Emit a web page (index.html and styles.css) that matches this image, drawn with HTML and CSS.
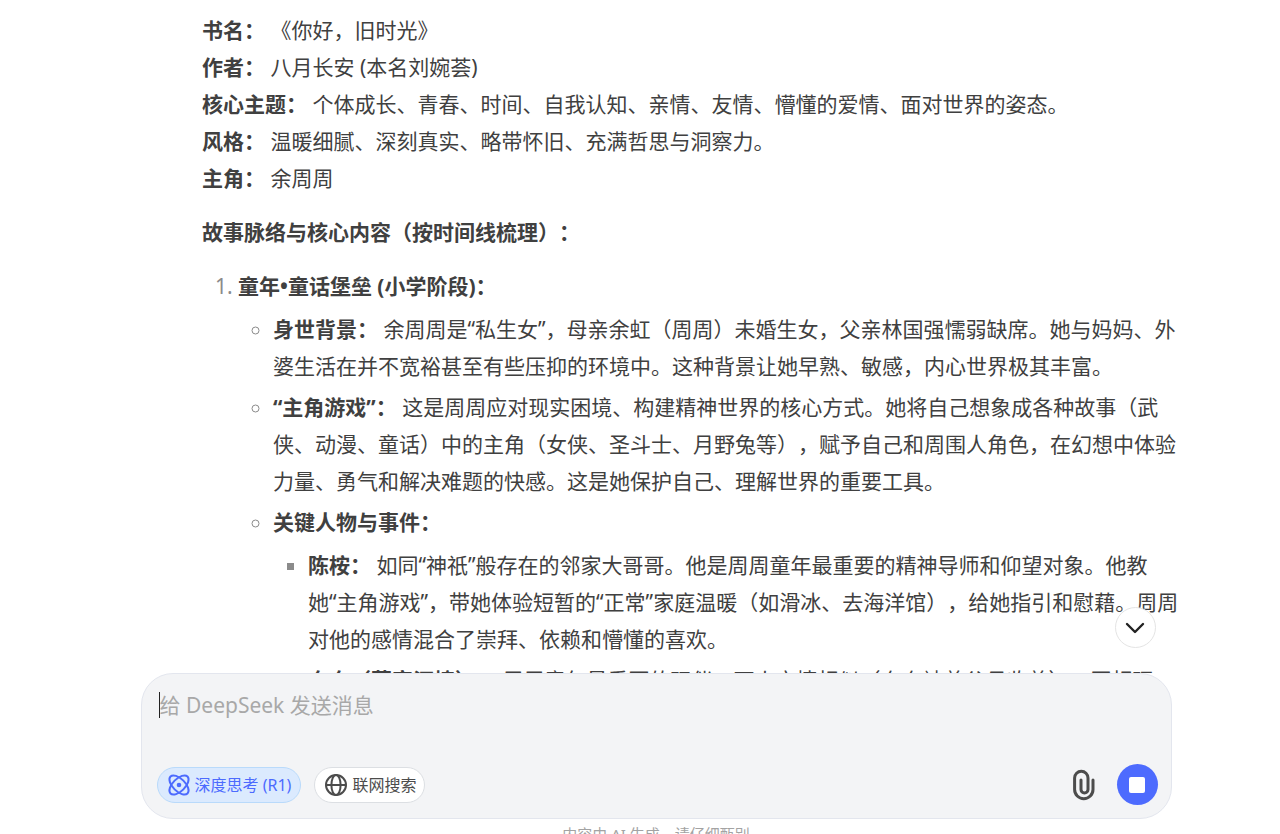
FILE: index.html
```html
<!DOCTYPE html>
<html lang="zh-CN">
<head>
<meta charset="utf-8">
<meta name="viewport" content="width=device-width, initial-scale=1">
<title>DeepSeek</title>
<link rel="stylesheet" href="styles.css">
</head>
<body>
<main class="page">
  <section class="messages">
    <article class="answer">
      <p class="para"><strong>书名：</strong> 《你好，旧时光》<br>
      <strong>作者：</strong> 八月长安 (本名刘婉荟)<br>
      <strong>核心主题：</strong> 个体成长、青春、时间、自我认知、亲情、友情、懵懂的爱情、面对世界的姿态。<br>
      <strong>风格：</strong> 温暖细腻、深刻真实、略带怀旧、充满哲思与洞察力。<br>
      <strong>主角：</strong> 余周周</p>
      <p class="para"><strong>故事脉络与核心内容（按时间线梳理）：</strong></p>
      <ol class="outline">
        <li><strong>童年•童话堡垒 (小学阶段)：</strong>
          <ul class="points">
            <li><strong>身世背景：</strong> 余周周是“私生女”，母亲余虹（周周）未婚生女，父亲林国强懦弱缺席。她与妈妈、外婆生活在并不宽裕甚至有些压抑的环境中。这种背景让她早熟、敏感，内心世界极其丰富。</li>
            <li><strong>“主角游戏”：</strong> 这是周周应对现实困境、构建精神世界的核心方式。她将自己想象成各种故事（武侠、动漫、童话）中的主角（女侠、圣斗士、月野兔等），赋予自己和周围人角色，在幻想中体验力量、勇气和解决难题的快感。这是她保护自己、理解世界的重要工具。</li>
            <li><strong>关键人物与事件：</strong>
              <ul class="details">
                <li><strong>陈桉：</strong> 如同“神祇”般存在的邻家大哥哥。他是周周童年最重要的精神导师和仰望对象。他教<span class="keep">她“主角游戏”，</span>带她体验短暂的“正常”家庭温暖（如滑冰、去海洋馆），给她指引和慰藉。周周对他的感情混合了崇拜、依赖和懵懂的喜欢。</li>
                <li><strong>奔奔（慕容沉樟）：</strong> 周周童年最重要的玩伴，两人亲情相似（奔奔被养父母收养），互相理解、互相依靠。</li>
              </ul>
            </li>
          </ul>
        </li>
      </ol>
    </article>
  </section>

  <form class="composer">
    <button class="jump" type="button" aria-label="回到底部">
      <svg width="20" height="12" viewBox="0 0 20 12" fill="none" stroke="#222" stroke-width="2.4" stroke-linecap="round" stroke-linejoin="round"><path d="M2 2l8 8 8-8"/></svg>
    </button>
    <div class="field">
      <textarea class="input" rows="2" aria-label="消息" placeholder="给 DeepSeek 发送消息"></textarea>
    </div>
    <div class="toolbar">
      <button class="chip chip-on" type="button">
        <svg width="22" height="22" viewBox="0 0 22 22" fill="none" stroke="#4d6bfe" stroke-width="2"><ellipse cx="11" cy="11" rx="12" ry="6.200" transform="rotate(45 11 11)"/><ellipse cx="11" cy="11" rx="12" ry="6.200" transform="rotate(-45 11 11)"/><circle cx="11" cy="11" r="2.300" fill="#4d6bfe" stroke="none"/></svg>
        深度思考 (R1)
      </button>
      <button class="chip" type="button">
        <svg width="22" height="22" viewBox="0 0 22 22" fill="none" stroke="#4c4c4c" stroke-width="2"><circle cx="11" cy="11" r="10"/><ellipse cx="11" cy="11" rx="4.6" ry="10"/><path d="M1 11h20"/></svg>
        联网搜索
      </button>
      <button class="attach" type="button" aria-label="附件">
        <svg width="24" height="32" viewBox="0 0 24 32" fill="none" stroke="#4c4c4c" stroke-width="3" stroke-linecap="round"><path d="M21 11v9.500a9.200 9.200 0 0 1-18.400 0V9a6.700 6.700 0 0 1 13.400 0v11.500a3.500 3.500 0 0 1-7 0V11"/></svg>
      </button>
      <button class="stop" type="button" aria-label="停止"><span class="stop-mark"></span></button>
    </div>
  </form>
  <footer class="note">内容由 AI 生成，请仔细甄别</footer>
</main>
</body>
</html>
```

FILE: styles.css
```css
* {
  box-sizing: border-box;
}

body {
  margin: 0;
  background: #fff;
  color: #404040;
  font-family: "Noto Sans", "Noto Sans CJK SC", sans-serif;
  font-size: 21px;
  line-height: 37px;
  text-spacing-trim: space-all;
}

button,
textarea {
  font-family: inherit;
}

button {
  border: 0;
  padding: 0;
  cursor: pointer;
}

svg {
  display: block;
  flex: none;
  overflow: visible;
}

.page {
  display: flex;
  flex-direction: column;
  align-items: center;
  height: 100vh;
  padding-left: 32px;
  overflow: hidden;
}

.messages {
  flex: 1;
  min-height: 0;
  width: 100%;
  max-width: 1064px;
  padding: 12px 0 0 78px;
  overflow: hidden;
}

.para {
  margin: 0 0 17px;
}

.outline,
.points,
.details {
  margin: 0;
  padding-left: 35px;
}

.outline {
  padding-left: 36px;
}

.points,
.details {
  margin-top: 6px;
}

.points > li + li,
.details > li + li {
  margin-top: 4px;
}

.keep {
  white-space: nowrap;
}

li::marker {
  color: #8b8b8b;
}

.points {
  list-style: circle;
}

.details {
  list-style: square;
}

.composer {
  position: relative;
  width: 100%;
  max-width: 1031px;
  padding: 13px 13px 13px 15px;
  border: 1px solid #e3e6ee;
  border-radius: 32px;
  background: #f3f4f6;
}

.field {
  position: relative;
  padding: 0 3px;
}

.field::before {
  content: "";
  position: absolute;
  top: 5px;
  left: 2px;
  width: 1px;
  height: 26px;
  background: #222;
}

.input {
  display: block;
  width: 100%;
  height: 74px;
  padding: 0;
  border: 0;
  outline: 0;
  resize: none;
  background: transparent;
  color: #404040;
  font-size: 21px;
  line-height: 37px;
}

.input::placeholder {
  color: #a8a8a8;
}

.toolbar {
  display: flex;
  align-items: center;
  gap: 13px;
  padding-top: 3px;
}

.chip {
  display: flex;
  align-items: center;
  gap: 5px;
  height: 36px;
  padding: 0 8px 0 10px;
  border: 1px solid #dcdfe3;
  border-radius: 18px;
  background: #fff;
  color: #4c4c4c;
  font-size: 16px;
  line-height: 20px;
}

.chip-on {
  padding-right: 9px;
  border-color: #b9dafb;
  background: #dbeafe;
  color: #4d6bfe;
}

.attach {
  margin-left: auto;
  background: transparent;
}

.stop {
  display: grid;
  place-items: center;
  width: 41px;
  height: 41px;
  margin-left: 8px;
  border-radius: 50%;
  background: #4d6bfe;
}

.stop-mark {
  width: 16px;
  height: 16px;
  border-radius: 2px;
  background: #fff;
}

.jump {
  position: absolute;
  top: -67px;
  right: 15px;
  display: grid;
  place-items: center;
  width: 41px;
  height: 41px;
  border: 1px solid #e4e4e4;
  border-radius: 50%;
  background: #fff;
}

.note {
  height: 15px;
  padding-top: 4px;
  color: #a3a3a3;
  font-size: 15px;
  line-height: 22px;
  white-space: nowrap;
}
```
